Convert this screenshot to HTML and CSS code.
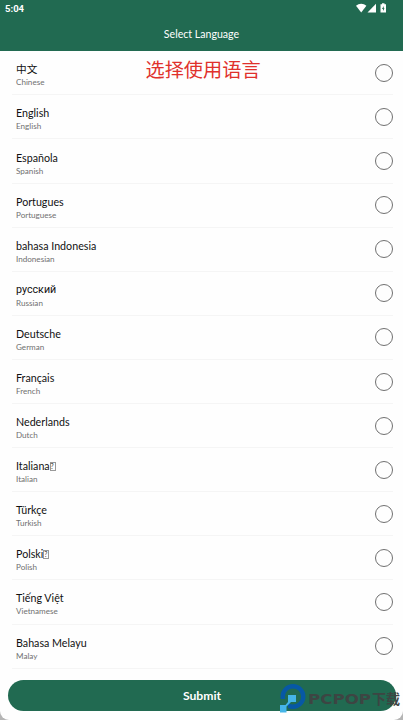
FILE: index.html
```html
<!DOCTYPE html>
<html lang="en">
<head>
    <meta charset="UTF-8">
    <meta name="viewport" content="width=device-width, initial-scale=1.0">
    <title>Select Language</title>
    <link rel="stylesheet" href="styles.css">
</head>
<body>
    <div class="screen">
        <header class="header">
            <div class="status-bar">
                <span class="time">5:04</span>
                <svg class="status-icons" width="32" height="11" viewBox="0 0 32 11" fill="#fff">
                    <path d="M0 2.800C3 0 7.400 0 10.400 2.800L5.200 9.500Z"/>
                    <path d="M11.500 9.500L20 .8V9.500Z"/>
                    <path fill-rule="evenodd" d="M24.500 1.300H26V.3H28.500V1.300H30V9.600H24.500ZM27.700 3L26 6H27V8L28.500 5.200H27.700Z"/>
                </svg>
            </div>
            <h1>Select Language</h1>
        </header>

        <main class="languages">
            <label class="row">
                <span class="names"><span class="native">中文</span><span class="english">Chinese</span></span>
                <input type="radio" name="language">
            </label>
            <label class="row">
                <span class="names"><span class="native">English</span><span class="english">English</span></span>
                <input type="radio" name="language">
            </label>
            <label class="row">
                <span class="names"><span class="native">Española</span><span class="english">Spanish</span></span>
                <input type="radio" name="language">
            </label>
            <label class="row">
                <span class="names"><span class="native">Portugues</span><span class="english">Portuguese</span></span>
                <input type="radio" name="language">
            </label>
            <label class="row">
                <span class="names"><span class="native">bahasa Indonesia</span><span class="english">Indonesian</span></span>
                <input type="radio" name="language">
            </label>
            <label class="row">
                <span class="names"><span class="native cyrillic">русский</span><span class="english">Russian</span></span>
                <input type="radio" name="language">
            </label>
            <label class="row">
                <span class="names"><span class="native">Deutsche</span><span class="english">German</span></span>
                <input type="radio" name="language">
            </label>
            <label class="row">
                <span class="names"><span class="native">Français</span><span class="english">French</span></span>
                <input type="radio" name="language">
            </label>
            <label class="row">
                <span class="names"><span class="native">Nederlands</span><span class="english">Dutch</span></span>
                <input type="radio" name="language">
            </label>
            <label class="row">
                <span class="names"><span class="native">Italiana<span class="missing">?</span></span><span class="english">Italian</span></span>
                <input type="radio" name="language">
            </label>
            <label class="row">
                <span class="names"><span class="native">Türkçe</span><span class="english">Turkish</span></span>
                <input type="radio" name="language">
            </label>
            <label class="row">
                <span class="names"><span class="native">Polski<span class="missing">?</span></span><span class="english">Polish</span></span>
                <input type="radio" name="language">
            </label>
            <label class="row">
                <span class="names"><span class="native">Tiếng Việt</span><span class="english">Vietnamese</span></span>
                <input type="radio" name="language">
            </label>
            <label class="row">
                <span class="names"><span class="native">Bahasa Melayu</span><span class="english">Malay</span></span>
                <input type="radio" name="language">
            </label>
        </main>

        <button class="submit">Submit</button>

        <div class="note">选择使用语言</div>

        <svg class="watermark" width="124" height="32" viewBox="0 0 124 32">
            <circle cx="14" cy="13.500" r="10.300" fill="none" stroke="#0758a5" stroke-width="4.400"/>
            <path d="M1 16H9V27H1Z" fill="#216a51"/>
            <path d="M9 12H17V19H12L7.500 23.500V29.500H1V22H6.500L9 19Z" fill="#45b5e8"/>
            <text class="mark-latin" x="29" y="21" textLength="63" lengthAdjust="spacingAndGlyphs">PCPOP</text>
            <text class="mark-cjk" x="93" y="20.500" textLength="28" lengthAdjust="spacingAndGlyphs">下载</text>
        </svg>
    </div>
</body>
</html>
```
FILE: styles.css
```css
* {
    box-sizing: border-box;
}
body {
    margin: 0;
    background-color: #b5b5b5;
    font-family: Lato, "Noto Sans CJK SC", sans-serif;
}
.screen {
    position: relative;
    height: 720px;
    overflow: hidden;
    background-color: #fefefe;
    border-radius: 0 0 9px 9px;
}
.header {
    height: 51.3px;
    background-color: #216a51;
    color: #fff;
}
.status-bar {
    display: flex;
    justify-content: space-between;
    padding: 3px 15px 0 5px;
    height: 18px;
}
.time {
    font-family: Roboto, sans-serif;
    font-size: 9.5px;
    font-weight: 700;
    line-height: 12px;
}
h1 {
    margin: 8px 0 0;
    font-size: 10.6px;
    font-weight: 400;
    line-height: 16px;
    text-align: center;
}
.languages {
    padding: 0 10px 0 12px;
}
.row {
    display: flex;
    align-items: center;
    justify-content: space-between;
    height: 44.1px;
    padding-left: 4px;
    border-bottom: 1px solid #f5f5f5;
}
.names {
    display: flex;
    flex-direction: column;
    padding-top: 4px;
}
.native {
    height: 15px;
    font-size: 10.7px;
    line-height: 15px;
    color: #111;
}
.cyrillic {
    font-family: Roboto, sans-serif;
    line-height: 16px;
}
.english {
    font-size: 8.1px;
    line-height: 12px;
    color: #707070;
}
.missing {
    display: inline-block;
    width: 6px;
    height: 9px;
    border: 1px solid #999;
    color: #333;
    font-size: 7px;
    line-height: 7px;
    text-align: center;
    text-indent: -1px;
    vertical-align: 1px;
}
input {
    appearance: none;
    width: 18px;
    height: 18px;
    margin: 0;
    border: 1px solid #707070;
    border-radius: 50%;
}
.submit {
    display: block;
    width: 388px;
    height: 31px;
    margin: 11.5px 0 0 8px;
    padding: 0;
    border: none;
    border-radius: 16px;
    background-color: #216a51;
    color: #fff;
    font-family: Lato, sans-serif;
    font-size: 12.2px;
    font-weight: 700;
}
/* floats over the first row */
.note {
    position: absolute;
    top: 58px;
    left: 145.5px;
    color: #e0312c;
    font-size: 19.2px;
    line-height: 24px;
}
.watermark {
    position: absolute;
    top: 683px;
    left: 279px;
}
.mark-latin {
    font-family: "DejaVu Sans", sans-serif;
    font-size: 14px;
    font-weight: 700;
    fill: #3d4543;
}
.mark-cjk {
    font-family: "Noto Sans CJK SC", sans-serif;
    font-size: 14px;
    font-weight: 700;
    fill: #3d4543;
}
```
